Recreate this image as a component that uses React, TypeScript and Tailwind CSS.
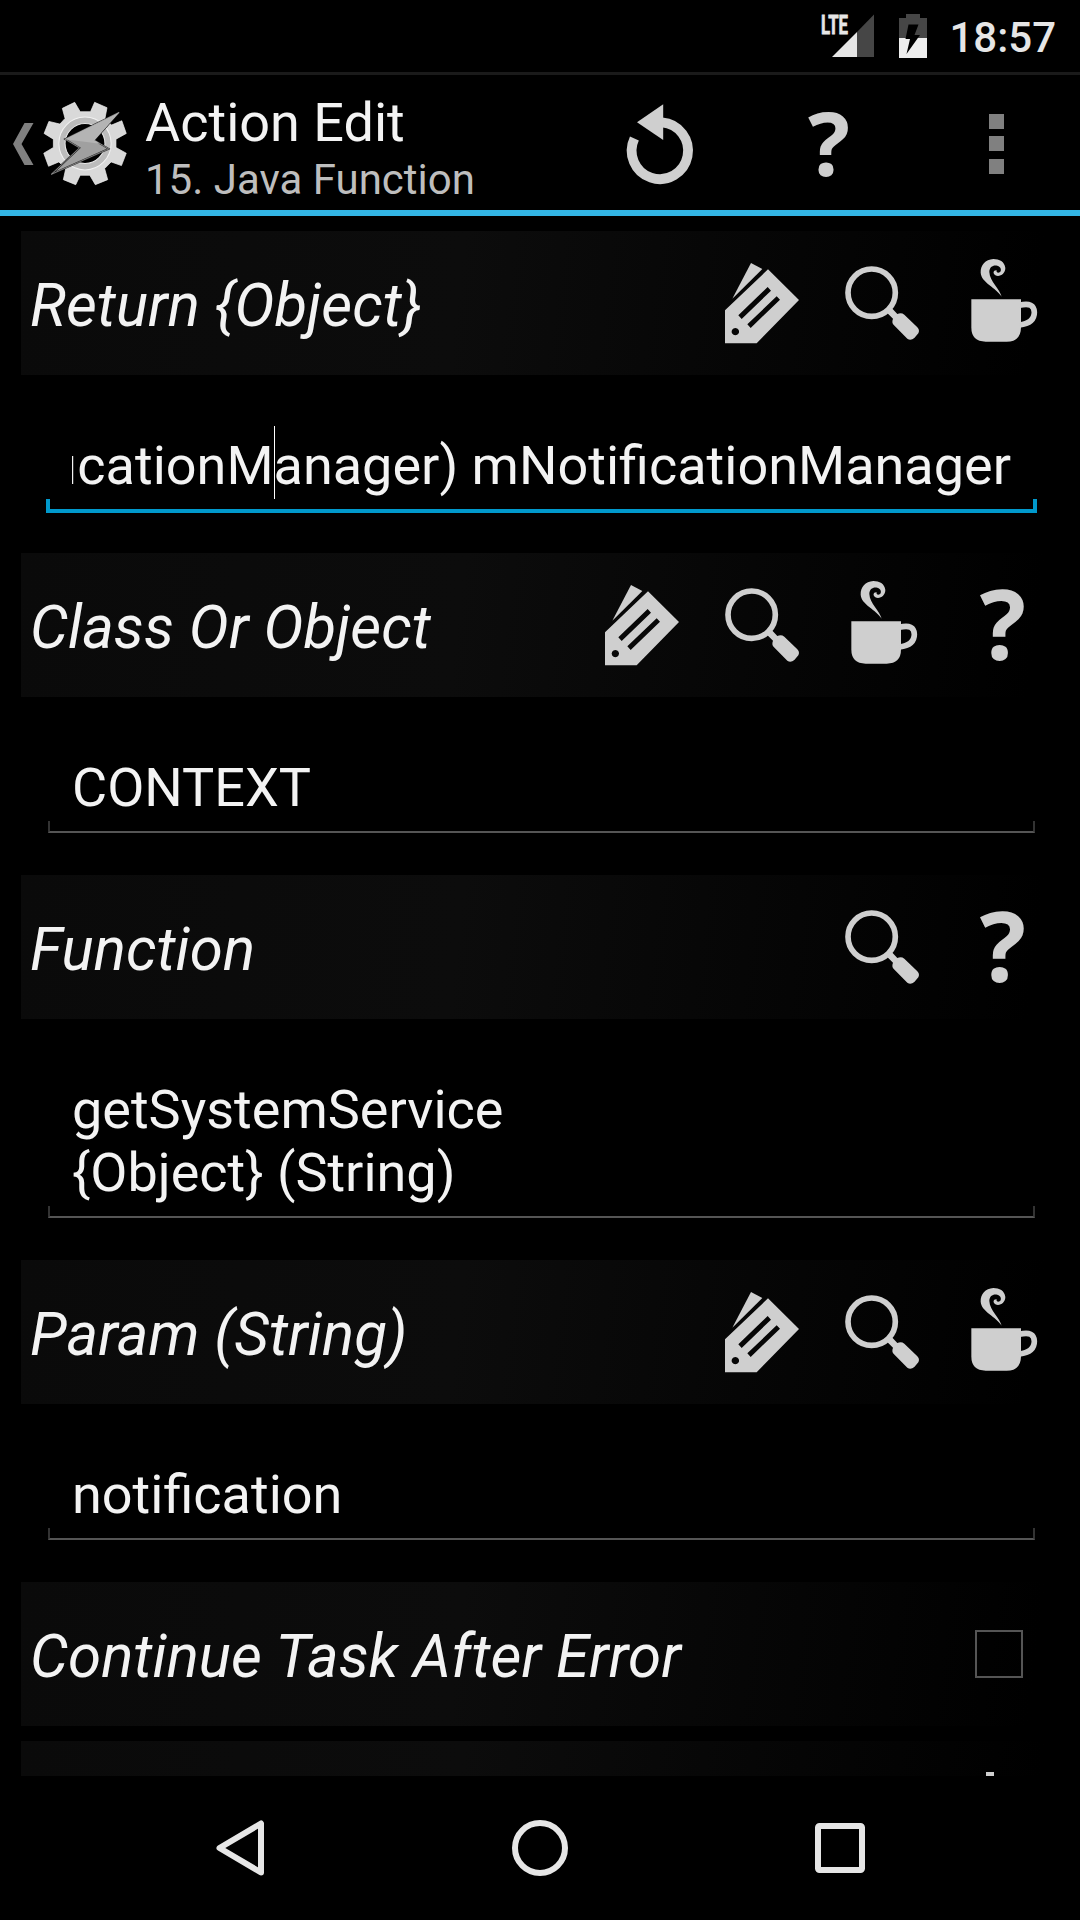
import type { ReactNode } from "react";

type IconName = "tag" | "search" | "cup" | "help" | "add";

function TagIcon() {
  return (
    <svg viewBox="0 -27 360 432" className="h-36 w-[120px] fill-[#cfcfcf]">
      <path d="M153 69 L187 87 L97 176 Z" />
      <path
        fillRule="evenodd"
        d="M204 88 L297 180 L170 310 H75 V211 Z M203 141 L115 226 L125 237 L213 152 Z M230 169 L142 253 L152 264 L240 179 Z M106 264 a11 11 0 1 0 0.1 0 Z"
      />
    </svg>
  );
}

function SearchIcon() {
  return (
    <svg viewBox="360 -27 360 432" className="h-36 w-[120px] fill-[#cfcfcf]">
      <circle cx="515" cy="158" r="71" fill="none" stroke="#cfcfcf" strokeWidth="17" />
      <path d="M558 215 L573 202 L592 222 Q604 217 613 224 L652 262 Q660 270 655 280 L643 294 Q632 303 622 296 L582 256 Q574 248 579 236 Z" />
    </svg>
  );
}

function CupIcon() {
  return (
    <svg viewBox="720 -27 360 432" className="h-36 w-[120px] fill-[#cfcfcf]">
      <path d="M814 178 H963 V262 Q963 305 920 305 H857 Q814 305 814 262 Z" />
      <path
        d="M958 196 C988 188 1003 196 1003 217 C1003 240 985 252 958 255"
        fill="none"
        stroke="#cfcfcf"
        strokeWidth="17"
      />
      <path d="M905 170 C900 148 869 124 868 96 C868 80 880 74 892 77 C903 80 906 92 899 97 C893 100 888 96 890 91 C879 90 878 101 886 106 C899 112 916 102 916 84 C914 65 898 57 880 57 C856 58 841 76 842 98 C844 128 888 142 905 170 Z" />
    </svg>
  );
}

function HelpIcon() {
  return (
    <svg viewBox="0 0 120 144" className="h-36 w-[120px] fill-[#cfcfcf]">
      <text
        x="63"
        y="107"
        fontSize="97"
        fontWeight="700"
        textAnchor="middle"
        className="font-['Open_Sans',sans-serif]"
      >
        ?
      </text>
    </svg>
  );
}

function AddIcon() {
  return (
    <svg viewBox="0 0 120 144" className="h-36 w-[120px] fill-[#cfcfcf]">
      <path d="M46 31 H54 V68 H91 V76 H54 V113 H46 V76 H9 V68 H46 Z" />
    </svg>
  );
}

const icons: Record<IconName, () => ReactNode> = {
  tag: TagIcon,
  search: SearchIcon,
  cup: CupIcon,
  help: HelpIcon,
  add: AddIcon,
};

function StatusBar() {
  return (
    <div className="flex h-[75px] items-start justify-end border-b-[3px] border-[#1a1a1a]">
      <svg viewBox="815 0 120 72" className="h-[72px] w-[120px]">
        <path d="M832 57 L857 32 V57 Z" fill="#e6e6e6" />
        <path d="M857 32 L874 14.5 V57 H857 Z" fill="#464646" />
        <text
          x="821"
          y="33.5"
          fontSize="26"
          fontWeight="700"
          textLength="27"
          lengthAdjust="spacingAndGlyphs"
          fill="#e6e6e6"
          stroke="#e6e6e6"
          strokeWidth="0.8"
        >
          LTE
        </text>
        <path d="M906 14 H920 V18 H927 V38 H899 V18 H906 Z" fill="#464646" />
        <path d="M899 38 H927 V58 H899 Z" fill="#eeeeee" />
        <path d="M908.5 24.5 H918.5 L914.5 35 H920 L906.5 54 L910 39 H905.5 Z" fill="#000" />
      </svg>
      <span className="mt-[13px] mr-6 ml-3.5 text-[42px] leading-[49px] font-medium text-[#e6e6e6]">
        18:57
      </span>
    </div>
  );
}

function GearLogo() {
  return (
    <svg viewBox="120 120 256 260" preserveAspectRatio="none" className="h-[87px] w-[88px]">
      <path
        d="M218 127 L234 155 H264 L276 127 L312 143 L306 175 L325 195 L355 182 L368 220 L338 237 V262 L368 279 L354 316 L324 305 L305 325 L314 358 L278 373 L262 345 H234 L221 373 L185 358 L192 325 L172 305 L142 318 L128 279 L156 262 V237 L129 220 L143 184 L175 192 L190 175 L182 145 Z"
        fill="#d9d9d9"
        stroke="#f0f0f0"
        strokeWidth="2"
      />
      <ellipse cx="248" cy="250" rx="76" ry="79" fill="#bcbcbc" stroke="#f2f2f2" strokeWidth="3" />
      <ellipse cx="248" cy="250" rx="58" ry="60" fill="#000" stroke="#e8e8e8" strokeWidth="3" />
      <path
        d="M347 157 L275 240 L317 266 L150 342 L232 263 L190 237 Z"
        fill="#a0a0a0"
        stroke="#222"
        strokeWidth="5"
      />
      <path d="M347 157 L275 240 L292 251 L190 237 Z" fill="#b4b4b4" />
      <path
        d="M347 157 L275 240 L317 266 L150 342 L232 263 L190 237 Z"
        fill="none"
        stroke="#d8d8d8"
        strokeWidth="1.5"
      />
    </svg>
  );
}

function ActionBar() {
  return (
    <header className="flex h-[141px] border-b-[6px] border-[#33b5e5]">
      <svg viewBox="0 75 41 135" className="h-[135px] w-[41px]">
        <path d="M24.5 123 H33.5 L21.5 144 L33.5 165 H24.5 L13 144 Z" fill="#808080" />
      </svg>
      <div className="pt-[25px]">
        <GearLogo />
      </div>
      <div className="flex-1 pt-4 pl-4 whitespace-nowrap">
        <h1 className="text-[54px] leading-[64px] text-[#f3f3f3]">Action Edit</h1>
        <p className="text-[42px] leading-[49px] text-[#bebebe]">15. Java Function</p>
      </div>
      <svg viewBox="576 75 168 135" className="h-[135px] w-[168px]">
        <path
          d="M662 122.4 A28.2 28.4 0 1 1 634.4 138.5"
          fill="none"
          stroke="#cfcfcf"
          strokeWidth="9.8"
        />
        <path d="M637 122.3 L663.2 104.3 V140 Z" fill="#cfcfcf" />
      </svg>
      <svg viewBox="744 75 168 135" className="h-[135px] w-[168px]">
        <text
          x="829"
          y="176"
          fontSize="88"
          fontWeight="700"
          textAnchor="middle"
          fill="#cfcfcf"
          className="font-['Open_Sans',sans-serif]"
        >
          ?
        </text>
      </svg>
      <svg viewBox="912 75 168 135" className="h-[135px] w-[168px]" fill="#808080">
        <rect x="989" y="114" width="15" height="15" />
        <rect x="989" y="136" width="15" height="15" />
        <rect x="989" y="159" width="15" height="15" />
      </svg>
    </header>
  );
}

function Row({ label, actions = [], children }: { label?: string; actions?: IconName[]; children?: ReactNode }) {
  return (
    <div className="mr-5 ml-[21px] flex h-36 shrink-0 items-center bg-[linear-gradient(97deg,#0a0a0a_0%,#0c0c0c_42%,#000_97%)]">
      <h2 className="flex-1 pt-1.5 pl-[9px] text-[60px] leading-[70px] tracking-[0.05px] whitespace-nowrap text-[#f3f3f3] italic">
        {label}
      </h2>
      {actions.map((name) => {
        const Icon = icons[name];
        return <Icon key={name} />;
      })}
      {children}
    </div>
  );
}

function Field({ lines }: { lines: string[] }) {
  return (
    <div className="mx-12 my-[42px] pt-[17px]">
      <div className="px-6 pb-[2px] text-[54px] leading-[63px] text-[#f3f3f3]">
        {lines.map((line) => (
          <p key={line}>{line}</p>
        ))}
      </div>
      <div className="-mr-[3px] h-3 border-x-2 border-b-2 border-x-[#333] border-b-[#555]" />
    </div>
  );
}

function FocusedField({ text }: { text: string }) {
  return (
    <div className="mx-[46px] mt-[42px] mb-10 pt-[17px]">
      <div className="relative mr-[23px] ml-[26px] pb-[2px] text-[54px] leading-[63px] text-[#f3f3f3]">
        <p className="flex justify-end overflow-hidden whitespace-nowrap">
          <span>{text}</span>
        </p>
        <span className="absolute -top-2 left-[202px] h-[73px] w-px bg-white" />
      </div>
      <div className="-mr-[3px] h-[14px] border-x-4 border-b-4 border-[#0099cc]" />
    </div>
  );
}

function NavBar() {
  return (
    <nav className="flex h-36 items-center justify-around px-[90px]">
      <svg viewBox="0 0 60 60" className="size-[60px]" fill="none" stroke="#e6e6e6" strokeWidth="6">
        <path d="M51 5.5 V54.5 L9.5 30 Z" strokeLinejoin="round" />
      </svg>
      <svg viewBox="0 0 60 60" className="size-[60px]" fill="none" stroke="#e6e6e6" strokeWidth="6">
        <circle cx="30" cy="30" r="25" />
      </svg>
      <svg viewBox="0 0 60 60" className="size-[60px]" fill="none" stroke="#e6e6e6" strokeWidth="6">
        <rect x="8" y="8" width="44" height="44" rx="1.5" />
      </svg>
    </nav>
  );
}

export default function App() {
  return (
    <div className="flex h-[1920px] w-[1080px] flex-col overflow-hidden bg-black font-['Roboto',sans-serif]">
      <StatusBar />
      <ActionBar />
      <main className="flex flex-1 flex-col overflow-hidden pt-[15px]">
        <Row label="Return {Object}" actions={["tag", "search", "cup"]} />
        <FocusedField text="(NotificationManager) mNotificationManager" />
        <Row label="Class Or Object" actions={["tag", "search", "cup", "help"]} />
        <Field lines={["CONTEXT"]} />
        <Row label="Function" actions={["search", "help"]} />
        <Field lines={["getSystemService", "{Object} (String)"]} />
        <Row label="Param (String)" actions={["tag", "search", "cup"]} />
        <Field lines={["notification"]} />
        <Row label="Continue Task After Error">
          <div className="mr-[37px] size-12 border-2 border-[#555]" />
        </Row>
        <div className="h-[15px] shrink-0" />
        <Row actions={["add"]} />
      </main>
      <NavBar />
    </div>
  );
}
